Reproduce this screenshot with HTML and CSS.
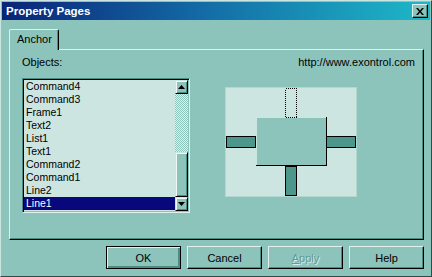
FILE: index.html
```html
<!DOCTYPE html>
<html lang="en">
<head>
    <meta charset="UTF-8">
    <title>Property Pages</title>
    <link rel="stylesheet" href="styles.css">
</head>
<body>
    <div class="window">
        <div class="titlebar">
            <span class="title">Property Pages</span>
            <button class="close" aria-label="Close">
                <svg width="8" height="7" viewBox="0 0 8 7"><path d="M0 0h2l2 2.5L6 0h2L5 3.5 8 7H6L4 4.5 2 7H0l3-3.5z" fill="#000"/></svg>
            </button>
        </div>

        <div class="content">
            <div class="tabs">
                <div class="tab">Anchor</div>
            </div>
            <div class="panel">
                <div class="panel-head">
                    <span>Objects:</span>
                    <span>http://www.exontrol.com</span>
                </div>
                <div class="panel-main">
                    <div class="listbox">
                        <ul class="items">
                            <li>Command4</li>
                            <li>Command3</li>
                            <li>Frame1</li>
                            <li>Text2</li>
                            <li>List1</li>
                            <li>Text1</li>
                            <li>Command2</li>
                            <li>Command1</li>
                            <li>Line2</li>
                            <li class="selected">Line1</li>
                        </ul>
                        <div class="scrollbar">
                            <div class="sb-btn">
                                <svg width="7" height="4" viewBox="0 0 7 4"><path d="M3.5 0L7 4H0z" fill="#000"/></svg>
                            </div>
                            <div class="sb-track"></div>
                            <div class="sb-thumb"></div>
                            <div class="sb-btn">
                                <svg width="7" height="4" viewBox="0 0 7 4"><path d="M0 0h7L3.5 4z" fill="#000"/></svg>
                            </div>
                        </div>
                    </div>

                    <div class="preview">
                        <svg width="132" height="110" viewBox="0 0 132 110" shape-rendering="crispEdges">
                            <rect x="0.5" y="0.5" width="131" height="109" fill="#cde5e1" stroke="#b2d6d0"/>
                            <rect x="60.5" y="1.5" width="11" height="29" fill="none" stroke="#000" stroke-dasharray="1 1"/>
                            <rect x="32" y="31" width="69" height="47" fill="#8cc4bc"/>
                            <path d="M101.5 30v49M31 78.5h71" stroke="#000" fill="none"/>
                            <rect x="1.5" y="49.5" width="29" height="11" fill="#4c968c" stroke="#000"/>
                            <rect x="101.5" y="49.5" width="29" height="11" fill="#4c968c" stroke="#000"/>
                            <rect x="60.5" y="79.5" width="11" height="29" fill="#4c968c" stroke="#000"/>
                        </svg>
                    </div>
                </div>
            </div>

            <div class="buttons">
                <button class="button default">OK</button>
                <button class="button">Cancel</button>
                <button class="button disabled"><u>A</u>pply</button>
                <button class="button">Help</button>
            </div>
        </div>
    </div>
</body>
</html>
```

FILE: styles.css
```css
body {
    margin: 0;
    font-family: "Liberation Sans", Arial, sans-serif;
    font-size: 11px;
    color: #000;
}
.window {
    width: 432px;
    height: 277px;
    box-sizing: border-box;
    background: #8cc4bc;
    border: 1px solid;
    border-color: #cde5e1 #2c4c48 #2c4c48 #cde5e1;
    padding: 1px;
    display: flex;
    flex-direction: column;
}
.titlebar {
    height: 18px;
    display: flex;
    align-items: center;
    justify-content: space-between;
    background: linear-gradient(to right, #0a2478, #1470a8 50%, #1eb8c8);
    padding: 0 2px 0 4px;
}
.title {
    color: #fff;
    font-weight: bold;
    font-size: 11.5px;
}
.close {
    width: 16px;
    height: 14px;
    padding: 0;
    margin: 0;
    background: #8cc4bc;
    border: 1px solid;
    border-color: #e0f0ec #000 #000 #e0f0ec;
    box-shadow: inset -1px -1px #4c8c84;
    display: flex;
    align-items: center;
    justify-content: center;
}
.content {
    padding: 9px 6px 0 7px;
    display: flex;
    flex-direction: column;
}
.tabs {
    display: flex;
    height: 20px;
}
.tab {
    position: relative;
    z-index: 1;
    height: 21px;
    box-sizing: border-box;
    padding: 0 6px 0 7px;
    line-height: 19px;
    background: #8cc4bc;
    border: 1px solid;
    border-bottom: none;
    border-color: #e0f0ec #000 #8cc4bc #e0f0ec;
    border-radius: 2px 2px 0 0;
    box-shadow: inset -1px 0 #4c8c84;
}
.panel {
    height: 191px;
    box-sizing: border-box;
    border: 1px solid;
    border-color: #e0f0ec #000 #000 #e0f0ec;
    box-shadow: inset -1px -1px #4c8c84;
    padding: 6px 8px 0 12px;
}
.panel-head {
    display: flex;
    justify-content: space-between;
    line-height: 13px;
}
.panel-main {
    display: flex;
    align-items: flex-start;
    margin-top: 9px;
}
.listbox {
    width: 168px;
    height: 135px;
    box-sizing: border-box;
    display: flex;
    background: #cde5e1;
    border: 1px solid;
    border-color: #4c8c84 #e0f0ec #e0f0ec #4c8c84;
    padding: 1px;
    box-shadow: inset 1px 1px #000, inset -1px -1px #8cc4bc;
}
.items {
    list-style: none;
    margin: 0;
    padding: 0;
    flex: 1;
    font-size: 10.5px;
}
.items li {
    height: 13px;
    line-height: 13px;
    padding-left: 2px;
}
.items .selected {
    background: #08087c;
    color: #fff;
}
.scrollbar {
    width: 13px;
    display: flex;
    flex-direction: column;
}
.sb-btn,
.sb-thumb {
    box-sizing: border-box;
    background: #8cc4bc;
    border: 1px solid;
    border-color: #cde5e1 #000 #000 #cde5e1;
    box-shadow: inset 1px 1px #f0f8f6, inset -1px -1px #4c8c84;
}
.sb-btn {
    height: 14px;
    display: flex;
    align-items: center;
    justify-content: center;
}
.sb-track {
    flex: 1;
    background: repeating-conic-gradient(#8cc4bc 0 25%, #e0f0ec 0 50%) 0 0 / 2px 2px;
}
.sb-thumb {
    height: 45px;
}
.preview {
    margin: 9px 0 0 35px;
    height: 110px;
}
.preview svg {
    display: block;
}
.buttons {
    display: flex;
    justify-content: flex-end;
    gap: 6px;
    margin-top: 6px;
}
.button {
    width: 75px;
    height: 23px;
    padding: 0;
    font-family: inherit;
    font-size: 11px;
    color: #000;
    background: #8cc4bc;
    border: 1px solid;
    border-color: #e0f0ec #000 #000 #e0f0ec;
    box-shadow: inset -1px -1px #4c8c84;
}
.button.default {
    border-color: #000;
    box-shadow: inset 1px 1px #e0f0ec, inset -2px -2px #4c8c84;
}
.button.disabled {
    color: #5e9c94;
    text-shadow: 1px 1px #d8ece8;
}
```
